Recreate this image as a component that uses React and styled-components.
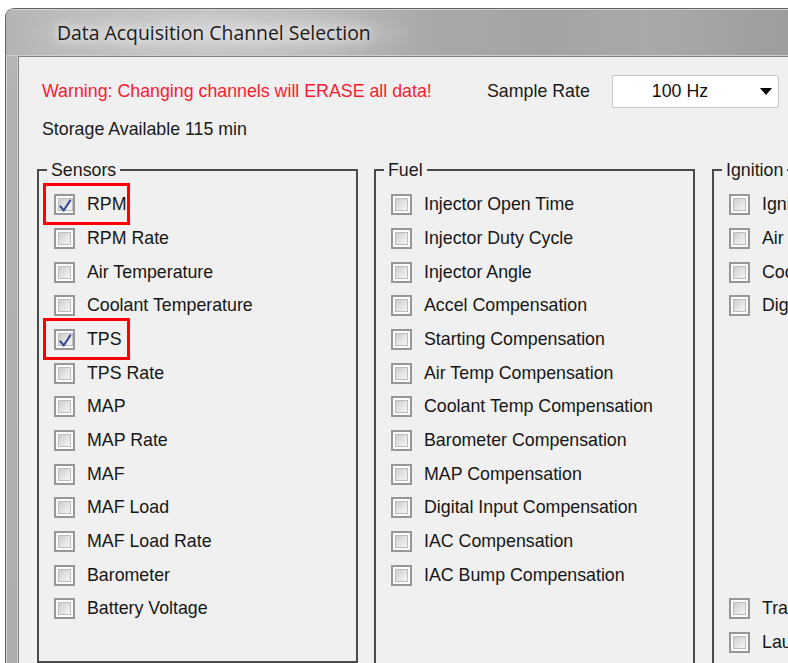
import React from "react";
import styled, { createGlobalStyle } from "styled-components";

const ROW = 33.667;
const TEXT = "17.8px";

const GlobalStyle = createGlobalStyle`
  html, body {
    margin: 0;
    padding: 0;
    background: #ffffff;
    overflow: hidden;
  }
  body {
    width: 788px;
    height: 663px;
    font-family: "Liberation Sans", Arial, sans-serif;
  }
`;

const Window = styled.div`
  margin: 8px 0 0 5px;
  width: 860px;
  height: 700px;
  box-sizing: border-box;
  border: 1px solid #626262;
  border-right: none;
  border-bottom: none;
  border-radius: 9px 0 0 0;
  background: linear-gradient(to bottom, #bcbcbc 0px, #b2b2b2 80px, #aeaeae 100%);
  box-shadow: inset 1px 1px 0 #d6d6d6;
  display: flex;
  flex-direction: column;
  overflow: hidden;
`;

const TitleBar = styled.div`
  height: 46px;
  flex: none;
  display: flex;
  align-items: center;
  padding-left: 51px;
  border-bottom: 1px solid #cbcbcb;
  background:
    radial-gradient(ellipse 200px 26px at 215px 24px, rgba(214, 214, 214, 0.9), rgba(214, 214, 214, 0) 100%),
    linear-gradient(90deg, #b4b4b4 0px, #bdbdbd 60px, #c2c2c2 200px, #b9b9b9 330px, #a9a9a9 420px, #a3a3a3 540px, #a9a9a9 640px, #9d9d9d 788px);
  box-shadow: inset 0 1px 0 #d4d4d4;
`;

const Title = styled.span`
  font-family: "Open Sans", "Noto Sans", sans-serif;
  font-size: 19.4px;
  color: #1c1c1c;
  text-shadow: 0 0 8px rgba(255, 255, 255, 0.9), 0 0 16px rgba(255, 255, 255, 0.6);
`;

const Client = styled.div`
  flex: 1;
  margin-left: 12px;
  border-top: 1px solid #858585;
  border-left: 1px solid #858585;
  box-shadow: -1px -1px 0 #cdcdcd;
  background: #f0f0f0;
  padding: 17px 0 0 18px;
  display: flex;
  flex-direction: column;
`;

const TopRow = styled.div`
  display: grid;
  grid-template-columns: 445px 125px 167px;
  align-items: center;
  height: 34px;
  margin-left: 5px;
  font-size: ${TEXT};
`;

const Warning = styled.span`
  color: #fc1a30;
  white-space: nowrap;
`;

const Label = styled.span`
  color: #1a1a1a;
  white-space: nowrap;
`;

const Combo = styled.div`
  height: 33px;
  box-sizing: border-box;
  border: 1px solid #c6c6c6;
  border-radius: 2px;
  background: #ffffff;
  display: flex;
  align-items: center;
`;

const ComboValue = styled.span`
  flex: 1;
  text-align: center;
  padding-right: 6px;
  color: #111111;
`;

const ComboArrow = styled.span`
  width: 25px;
  display: flex;
  justify-content: center;
  &::after {
    content: "";
    border-left: 6px solid transparent;
    border-right: 6px solid transparent;
    border-top: 7px solid #000000;
  }
`;

const Storage = styled.div`
  margin: 11px 0 0 5px;
  line-height: 20px;
  font-size: ${TEXT};
  color: #1a1a1a;
`;

const Groups = styled.div`
  margin-top: 21px;
  display: flex;
  align-items: flex-start;
  gap: 16px;
`;

const Group = styled.fieldset`
  margin: 0 0 0 ${(p) => p.$offset || 0}px;
  padding: 0;
  min-width: 0;
  flex: none;
  width: 321px;
  height: ${(p) => (p.$tall ? "540px" : "auto")};
  box-sizing: border-box;
  border: 2px solid #4b4b4b;
`;

const Legend = styled.legend`
  margin-left: 8px;
  padding: 0 4px;
  font-size: ${TEXT};
  line-height: 20px;
  color: #1a1a1a;
`;

const GroupBody = styled.div`
  display: flex;
  flex-direction: column;
  padding: 8px 0 ${(p) => (p.$tall ? 0 : 35)}px 15px;
`;

const Row = styled.label`
  position: relative;
  height: ${ROW}px;
  display: flex;
  align-items: center;
  gap: 12px;
  font-size: ${TEXT};
  color: #161616;
  white-space: nowrap;
`;

const Spacer = styled.div`
  height: ${(p) => p.$rows * ROW}px;
`;

const Box = styled.span`
  width: 21px;
  height: 21px;
  flex: none;
  box-sizing: border-box;
  border: 2px solid #979797;
  padding: 2px;
  background: #fbfbfb;
  display: flex;
`;

const BoxFace = styled.span`
  flex: 1;
  box-sizing: border-box;
  border: 1px solid #bdbdbd;
  background: linear-gradient(135deg, #cdcdcd 0%, #e4e4e4 55%, #f5f5f5 100%);
  display: flex;
`;

const Highlight = styled.span`
  position: absolute;
  left: -11px;
  top: -5px;
  width: 87px;
  height: 42px;
  box-sizing: border-box;
  border: 3px solid #ff0000;
  pointer-events: none;
`;

const CheckMark = () => (
  <svg width="13" height="13" viewBox="0 0 12 12" style={{ overflow: "visible" }}>
    <path d="M1.3 6.8 L4.3 10.6 L10.4 1.2" fill="none" stroke="#3b4b92" strokeWidth="2" strokeLinecap="round" strokeLinejoin="round" />
  </svg>
);

const CheckRow = ({ label, checked, marked }) => (
  <Row>
    <Box>
      <BoxFace>{checked && <CheckMark />}</BoxFace>
    </Box>
    <span>{label}</span>
    {marked && <Highlight />}
  </Row>
);

const sensors = [
  { label: "RPM", checked: true, marked: true },
  { label: "RPM Rate" },
  { label: "Air Temperature" },
  { label: "Coolant Temperature" },
  { label: "TPS", checked: true, marked: true },
  { label: "TPS Rate" },
  { label: "MAP" },
  { label: "MAP Rate" },
  { label: "MAF" },
  { label: "MAF Load" },
  { label: "MAF Load Rate" },
  { label: "Barometer" },
  { label: "Battery Voltage" },
];

const fuel = [
  "Injector Open Time",
  "Injector Duty Cycle",
  "Injector Angle",
  "Accel Compensation",
  "Starting Compensation",
  "Air Temp Compensation",
  "Coolant Temp Compensation",
  "Barometer Compensation",
  "MAP Compensation",
  "Digital Input Compensation",
  "IAC Compensation",
  "IAC Bump Compensation",
].map((label) => ({ label }));

const ignition = [
  { label: "Ignition Timing" },
  { label: "Air Temp Compensation" },
  { label: "Coolant Temp Compensation" },
  { label: "Digital Input Compensation" },
  { gap: 8 },
  { label: "Traction Control" },
  { label: "Launch Control" },
];

const ChannelGroup = ({ title, items, tall, offset }) => (
  <Group $tall={tall} $offset={offset}>
    <Legend>{title}</Legend>
    <GroupBody $tall={tall}>
      {items.map((item, i) =>
        item.gap ? (
          <Spacer key={i} $rows={item.gap} />
        ) : (
          <CheckRow key={i} {...item} />
        )
      )}
    </GroupBody>
  </Group>
);

export default function App() {
  return (
    <>
      <GlobalStyle />
      <Window>
        <TitleBar>
          <Title>Data Acquisition Channel Selection</Title>
        </TitleBar>
        <Client>
          <TopRow>
            <Warning>Warning: Changing channels will ERASE all data!</Warning>
            <Label>Sample Rate</Label>
            <Combo>
              <ComboValue>100 Hz</ComboValue>
              <ComboArrow />
            </Combo>
          </TopRow>
          <Storage>Storage Available 115 min</Storage>
          <Groups>
            <ChannelGroup title="Sensors" items={sensors} />
            <ChannelGroup title="Fuel" items={fuel} tall />
            <ChannelGroup title="Ignition" items={ignition} tall offset={1} />
          </Groups>
        </Client>
      </Window>
    </>
  );
}
